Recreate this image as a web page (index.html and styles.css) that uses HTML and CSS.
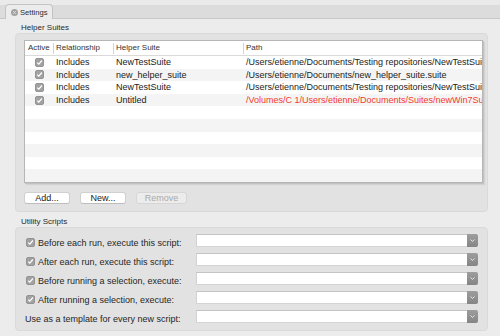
FILE: index.html
```html
<!DOCTYPE html>
<html lang="en">
<head>
    <meta charset="UTF-8">
    <meta name="viewport" content="width=device-width, initial-scale=1.0">
    <title>Settings</title>
    <link rel="stylesheet" href="styles.css">
</head>
<body>
    <header class="tabbar">
        <div class="tab">
            <svg class="tab-close" width="7" height="7" viewBox="0 0 7 7">
                <circle cx="3.5" cy="3.5" r="3.5" fill="#a3a3a3"/>
                <path d="M2.2 2.2L4.8 4.8M4.8 2.2L2.2 4.8" stroke="#e4e4e4" stroke-width="0.9"/>
            </svg>
            <span>Settings</span>
        </div>
    </header>

    <main class="pane">
        <!-- Helper Suites -->
        <div class="group-title">Helper Suites</div>
        <section class="group suites">
            <div class="table">
                <div class="thead">
                    <div class="th">Active</div>
                    <div class="th">Relationship</div>
                    <div class="th">Helper Suite</div>
                    <div class="th">Path</div>
                </div>
                <div class="row">
                    <div class="td center"><svg class="cb" width="9" height="9" viewBox="0 0 9 9"><rect x="0.5" y="0.5" width="8" height="8" rx="1.5" fill="#a2a2a2" stroke="#939393"/><path d="M2.2 4.6L3.8 6.2L6.9 2.5" stroke="#fff" stroke-width="1.2" fill="none"/></svg></div>
                    <div class="td">Includes</div>
                    <div class="td">NewTestSuite</div>
                    <div class="td">/Users/etienne/Documents/Testing repositories/NewTestSuite.suite</div>
                </div>
                <div class="row">
                    <div class="td center"><svg class="cb" width="9" height="9" viewBox="0 0 9 9"><rect x="0.5" y="0.5" width="8" height="8" rx="1.5" fill="#a2a2a2" stroke="#939393"/><path d="M2.2 4.6L3.8 6.2L6.9 2.5" stroke="#fff" stroke-width="1.2" fill="none"/></svg></div>
                    <div class="td">Includes</div>
                    <div class="td">new_helper_suite</div>
                    <div class="td">/Users/etienne/Documents/new_helper_suite.suite</div>
                </div>
                <div class="row">
                    <div class="td center"><svg class="cb" width="9" height="9" viewBox="0 0 9 9"><rect x="0.5" y="0.5" width="8" height="8" rx="1.5" fill="#a2a2a2" stroke="#939393"/><path d="M2.2 4.6L3.8 6.2L6.9 2.5" stroke="#fff" stroke-width="1.2" fill="none"/></svg></div>
                    <div class="td">Includes</div>
                    <div class="td">NewTestSuite</div>
                    <div class="td">/Users/etienne/Documents/Testing repositories/NewTestSuite.suite</div>
                </div>
                <div class="row">
                    <div class="td center"><svg class="cb" width="9" height="9" viewBox="0 0 9 9"><rect x="0.5" y="0.5" width="8" height="8" rx="1.5" fill="#a2a2a2" stroke="#939393"/><path d="M2.2 4.6L3.8 6.2L6.9 2.5" stroke="#fff" stroke-width="1.2" fill="none"/></svg></div>
                    <div class="td">Includes</div>
                    <div class="td">Untitled</div>
                    <div class="td missing">/Volumes/C 1/Users/etienne/Documents/Suites/newWin7Suite.suite</div>
                </div>
                <div class="row"></div>
                <div class="row"></div>
                <div class="row"></div>
                <div class="row"></div>
                <div class="row"></div>
                <div class="row"></div>
            </div>
            <div class="buttons">
                <button class="btn">Add...</button>
                <button class="btn">New...</button>
                <button class="btn remove" disabled>Remove</button>
            </div>
        </section>

        <!-- Utility Scripts -->
        <div class="group-title second">Utility Scripts</div>
        <section class="group scripts">
            <div class="script-row">
                <label class="opt"><svg class="cb" width="9" height="9" viewBox="0 0 9 9"><rect x="0.5" y="0.5" width="8" height="8" rx="1.5" fill="#a2a2a2" stroke="#939393"/><path d="M2.2 4.6L3.8 6.2L6.9 2.5" stroke="#fff" stroke-width="1.2" fill="none"/></svg>Before each run, execute this script:</label>
                <div class="combo"><span class="combo-field"></span><span class="combo-arrow"><svg width="5" height="3" viewBox="0 0 5 3"><path d="M0.5 0.5L2.5 2.4L4.5 0.5" stroke="#eee" stroke-width="0.9" fill="none"/></svg></span></div>
            </div>
            <div class="script-row">
                <label class="opt"><svg class="cb" width="9" height="9" viewBox="0 0 9 9"><rect x="0.5" y="0.5" width="8" height="8" rx="1.5" fill="#a2a2a2" stroke="#939393"/><path d="M2.2 4.6L3.8 6.2L6.9 2.5" stroke="#fff" stroke-width="1.2" fill="none"/></svg>After each run, execute this script:</label>
                <div class="combo"><span class="combo-field"></span><span class="combo-arrow"><svg width="5" height="3" viewBox="0 0 5 3"><path d="M0.5 0.5L2.5 2.4L4.5 0.5" stroke="#eee" stroke-width="0.9" fill="none"/></svg></span></div>
            </div>
            <div class="script-row">
                <label class="opt"><svg class="cb" width="9" height="9" viewBox="0 0 9 9"><rect x="0.5" y="0.5" width="8" height="8" rx="1.5" fill="#a2a2a2" stroke="#939393"/><path d="M2.2 4.6L3.8 6.2L6.9 2.5" stroke="#fff" stroke-width="1.2" fill="none"/></svg>Before running a selection, execute:</label>
                <div class="combo"><span class="combo-field"></span><span class="combo-arrow"><svg width="5" height="3" viewBox="0 0 5 3"><path d="M0.5 0.5L2.5 2.4L4.5 0.5" stroke="#eee" stroke-width="0.9" fill="none"/></svg></span></div>
            </div>
            <div class="script-row">
                <label class="opt"><svg class="cb" width="9" height="9" viewBox="0 0 9 9"><rect x="0.5" y="0.5" width="8" height="8" rx="1.5" fill="#a2a2a2" stroke="#939393"/><path d="M2.2 4.6L3.8 6.2L6.9 2.5" stroke="#fff" stroke-width="1.2" fill="none"/></svg>After running a selection, execute:</label>
                <div class="combo"><span class="combo-field"></span><span class="combo-arrow"><svg width="5" height="3" viewBox="0 0 5 3"><path d="M0.5 0.5L2.5 2.4L4.5 0.5" stroke="#eee" stroke-width="0.9" fill="none"/></svg></span></div>
            </div>
            <div class="script-row">
                <label class="opt plain">Use as a template for every new script:</label>
                <div class="combo"><span class="combo-field"></span><span class="combo-arrow"><svg width="5" height="3" viewBox="0 0 5 3"><path d="M0.5 0.5L2.5 2.4L4.5 0.5" stroke="#eee" stroke-width="0.9" fill="none"/></svg></span></div>
            </div>
        </section>
    </main>
</body>
</html>
```

FILE: styles.css
```css
/* Basic Reset */
* {
    box-sizing: border-box;
    margin: 0;
    padding: 0;
}

body {
    width: 500px;
    height: 336px;
    overflow: hidden;
    background: #ececec;
    font-family: "Liberation Sans", Arial, sans-serif;
    color: #222;
}

/* Tab bar */
.tabbar {
    height: 19px;
    padding: 4px 0 0 5px;
    background: linear-gradient(#eaeaea 5px, #dcdcdc 5px);
    border-bottom: 1px solid #c8c8c8;
}

.tab {
    display: flex;
    align-items: center;
    gap: 2px;
    width: 48px;
    height: 15px;
    padding-left: 5px;
    background: #ececec;
    border: 1px solid #c3c3c3;
    border-bottom: none;
    border-radius: 4px 4px 0 0;
    font-size: 7.6px;
    color: #2c2c2c;
}

.tab-close {
    flex: none;
}

/* Pane */
.pane {
    padding: 0 12px 0 15px;
}

.group-title {
    height: 14px;
    padding: 4px 0 0 6px;
    font-size: 8px;
    line-height: 10px;
    color: #2a2a2a;
}

.group-title.second {
    height: 15px;
    padding-top: 5px;
}

.group {
    background: #e2e2e2;
    border: 1px solid #dadada;
    border-radius: 4px;
}

/* Helper Suites */
.suites {
    padding: 6px 4px 7px 8px;
}

.table {
    width: 459px;
    height: 143px;
    background: #fff;
    border: 1px solid #b6b6b6;
    box-shadow: 1px 1px 0 #c2c2c2, 2px 2px 1px rgba(0, 0, 0, 0.07);
    overflow: hidden;
}

.thead,
.row {
    display: grid;
    grid-template-columns: 28px 60px 130px 239px;
}

.thead {
    height: 15px;
    border-bottom: 1px solid #dadada;
}

.th {
    padding-left: 4px;
    font-size: 8px;
    line-height: 14px;
    color: #333;
    white-space: nowrap;
}

.th + .th {
    padding-left: 3px;
    background: linear-gradient(#d4d4d4, #d4d4d4) no-repeat left center / 1px 11px;
}

.th:first-child {
    padding-left: 3px;
}

.row {
    height: 12.6px;
}

.row:nth-child(odd) {
    background: #f4f4f4;
}

.td {
    padding-left: 3px;
    font-size: 9px;
    line-height: 12.6px;
    white-space: nowrap;
    overflow: hidden;
}

.td.center {
    display: flex;
    align-items: center;
    justify-content: center;
    padding-left: 1px;
}

.td.missing {
    color: #f5392d;
}

.cb {
    flex: none;
    display: block;
}

.buttons {
    display: flex;
    gap: 10px;
    margin-top: 9px;
}

.btn {
    width: 46px;
    height: 12px;
    background: #fff;
    border: 1px solid #d0d0d0;
    border-bottom-color: #bdbdbd;
    border-radius: 3px;
    font-family: inherit;
    font-size: 9px;
    line-height: 10px;
    color: #222;
}

.btn.remove {
    width: 51px;
    background: #ececec;
    border-color: #d6d6d6;
    color: #aaa;
}

/* Utility Scripts */
.scripts {
    display: flex;
    flex-direction: column;
    gap: 6px;
    padding: 6px 9px 7px 9px;
}

.script-row {
    display: grid;
    grid-template-columns: 171px 282px;
    height: 13px;
}

.opt {
    display: flex;
    align-items: center;
    gap: 3px;
    height: 13px;
    padding: 4px 0 0 1px;
    font-size: 9px;
    color: #262626;
    white-space: nowrap;
}

.opt.plain {
    padding-left: 0;
}

.combo {
    display: flex;
    height: 13px;
}

.combo-field {
    flex: 1;
    background: #fff;
    border-top: 1px solid #c4c4c4;
    border-left: 1px solid #d2d2d2;
    border-bottom: 1px solid #d4d4d4;
}

.combo-arrow {
    display: flex;
    align-items: center;
    justify-content: center;
    width: 11px;
    background: linear-gradient(#9d9d9d, #858585);
    border-radius: 0 2px 2px 0;
}
```
